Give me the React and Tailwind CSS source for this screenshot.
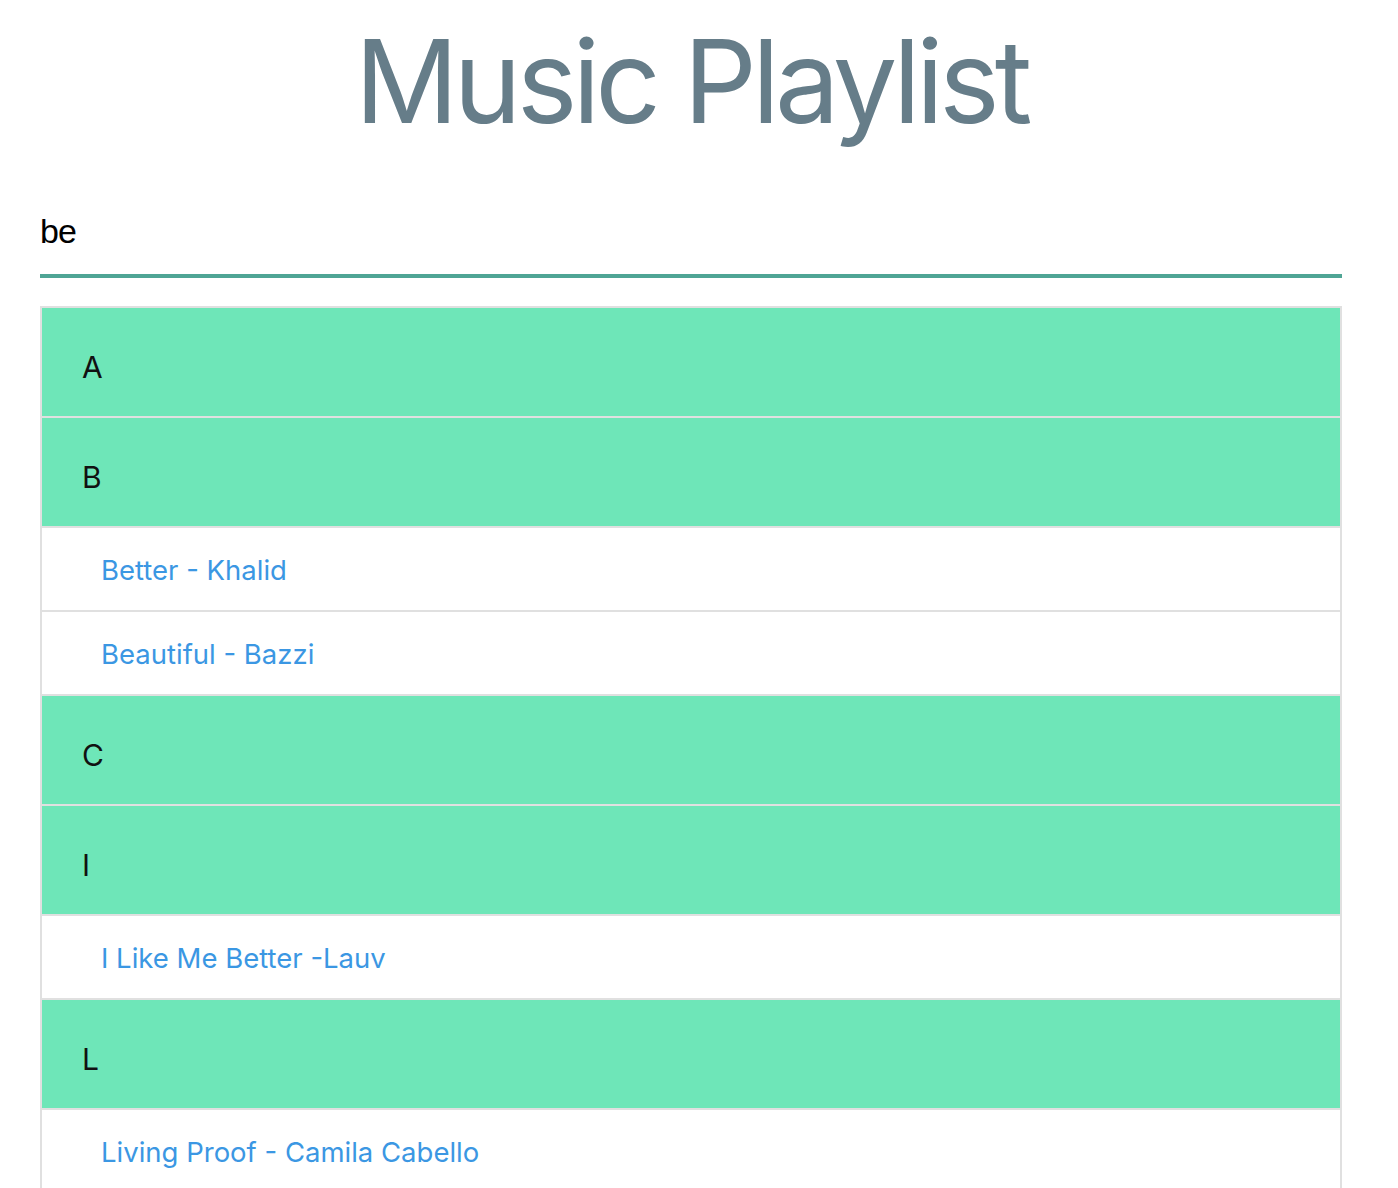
import { useState } from 'react'

const songs = [
  { letter: 'A', items: [] },
  { letter: 'B', items: ['Better - Khalid', 'Beautiful - Bazzi'] },
  { letter: 'C', items: [] },
  { letter: 'I', items: ['I Like Me Better -Lauv'] },
  { letter: 'L', items: ['Living Proof - Camila Cabello'] },
]

export default function App() {
  const [query, setQuery] = useState('be')

  return (
    <div className="min-h-screen bg-white font-['Inter',sans-serif]">
      <div className="ml-[40px] w-[1302px]">
        {/* Title */}
        <h1 className="mt-[24px] text-center text-[115px] leading-none font-normal tracking-[-0.043em] text-[#667d89]">
          Music Playlist
        </h1>

        {/* Search */}
        <input
          autoFocus
          value={query}
          onChange={(e) => setQuery(e.target.value)}
          className="mt-[49px] block h-[90px] w-full border-b-4 border-[#4fa595] bg-transparent font-['Liberation_Sans',Arial,sans-serif] text-[34px] tracking-[-1px] text-black caret-black outline-none"
        />

        {/* List */}
        <ul className="mt-[28px] border-2 border-b-0 border-[#e0e0e0]">
          {songs.map((group) => (
            <li key={group.letter}>
              <div className="flex h-[110px] items-center border-b-2 border-[#e0e0e0] bg-[#6ee6b8] pl-[40px] pt-[10px] text-[30px] text-[#111]">
                {group.letter}
              </div>
              {group.items.map((title) => (
                <div
                  key={title}
                  className="flex h-[84px] items-center border-b-2 border-[#e0e0e0] pl-[59px] pt-[3px] text-[27.5px] text-[#3b97e3]"
                >
                  {title}
                </div>
              ))}
            </li>
          ))}
        </ul>
      </div>
    </div>
  )
}
